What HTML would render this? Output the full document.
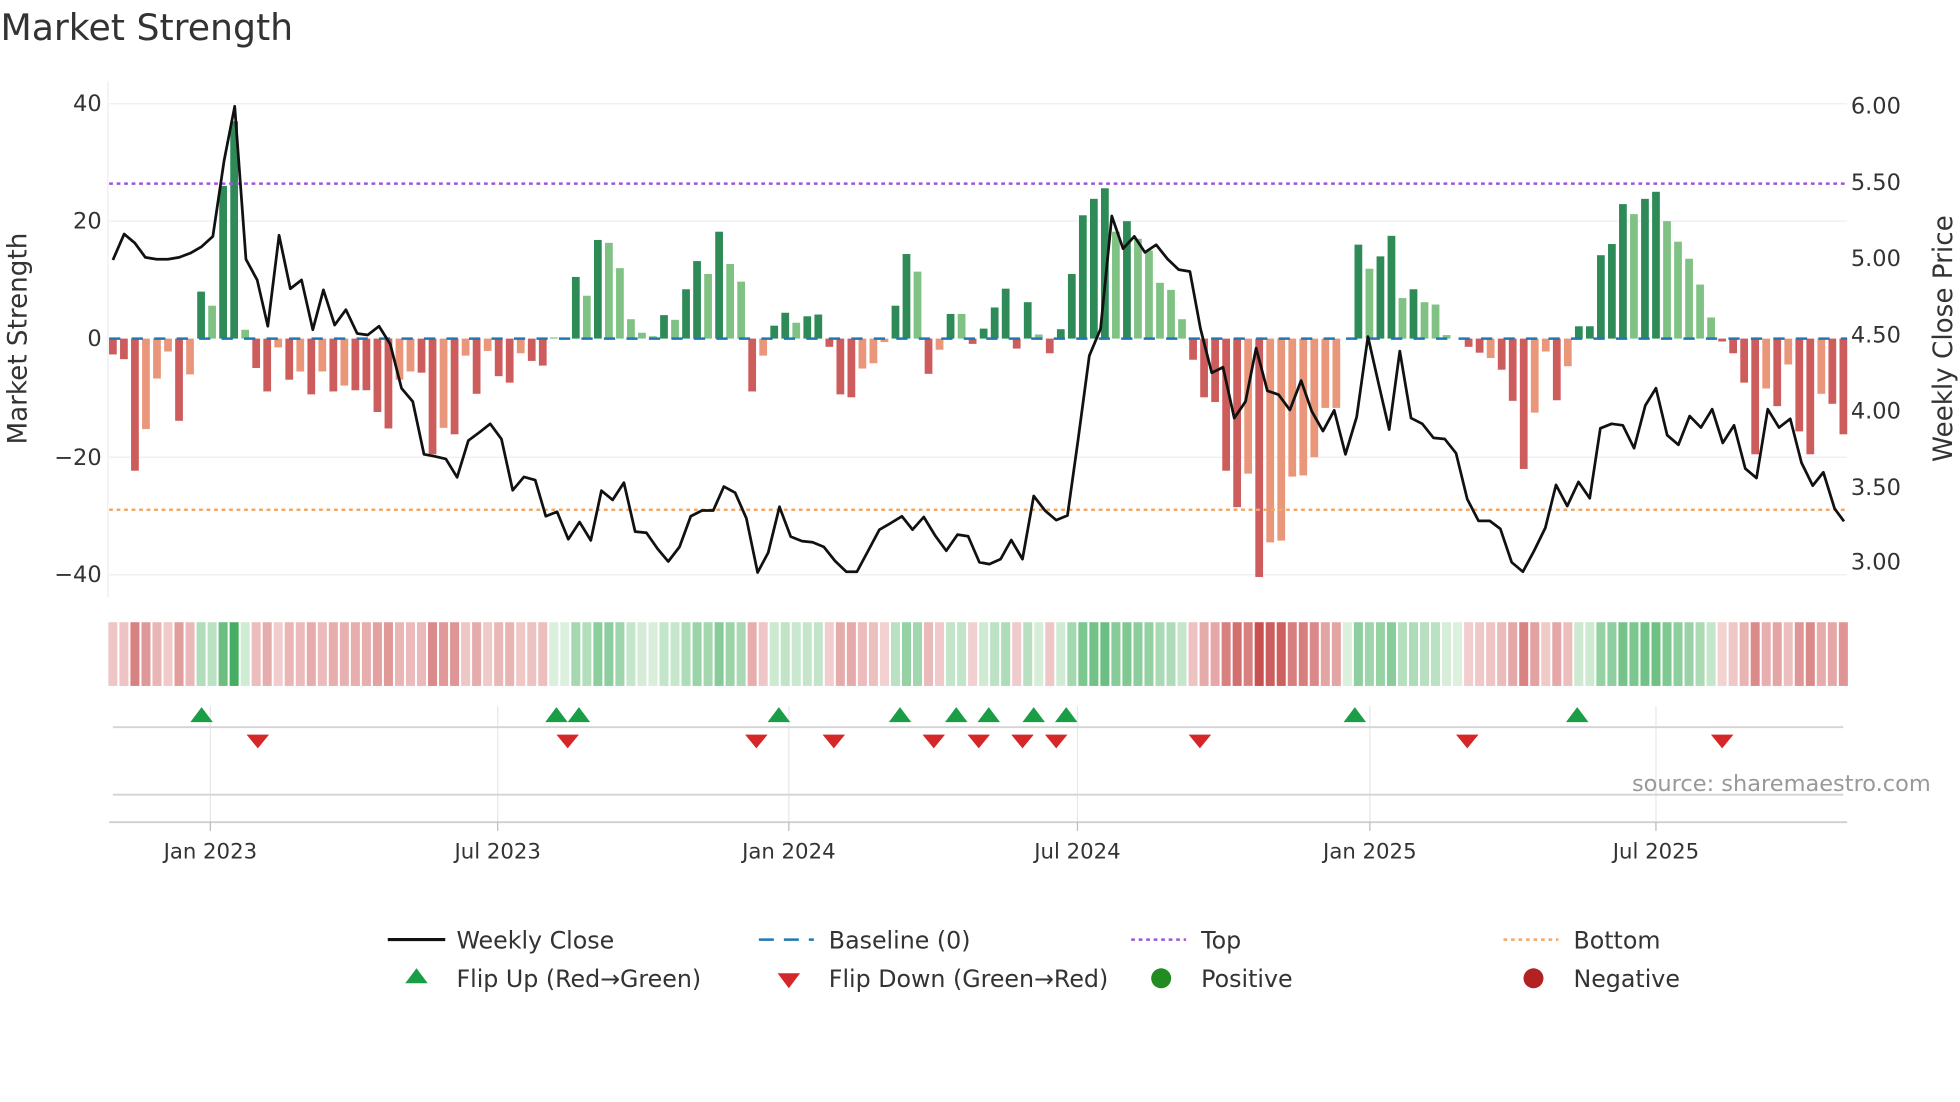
<!DOCTYPE html>
<html><head><meta charset="utf-8"><style>
html,body{margin:0;padding:0;background:#fff;width:1960px;height:1102px;overflow:hidden}
svg{display:block}
text{font-family:"DejaVu Sans","Liberation Sans",sans-serif;fill:#333}
</style></head><body>
<svg id="s" width="1960" height="1102" viewBox="0 0 1568 882" xmlns="http://www.w3.org/2000/svg">
<text x="0" y="32" font-size="29">Market Strength</text>
<g stroke="#eceef2" stroke-width="1">
<line x1="87" y1="83" x2="1478" y2="83"/><line x1="87" y1="177" x2="1478" y2="177"/>
<line x1="87" y1="366" x2="1478" y2="366"/><line x1="87" y1="460" x2="1478" y2="460"/>
<line x1="86" y1="65" x2="86" y2="478"/>
</g>
<g font-size="18" text-anchor="end">
<text x="81" y="89">40</text><text x="81" y="183">20</text><text x="81" y="277">0</text>
<text x="81" y="372">−20</text><text x="81" y="466">−40</text>
</g>
<g font-size="18">
<text x="1481" y="91">6.00</text><text x="1481" y="152">5.50</text><text x="1481" y="213">5.00</text>
<text x="1481" y="274">4.50</text><text x="1481" y="335">4.00</text><text x="1481" y="396">3.50</text>
<text x="1481" y="456">3.00</text>
</g>
<text transform="translate(21,271) rotate(-90)" font-size="21" text-anchor="middle">Market Strength</text>
<text transform="translate(1562,271) rotate(-90)" font-size="21" text-anchor="middle">Weekly Close Price</text>
<g id="bars"></g>
<line x1="87" y1="271" x2="1478" y2="271" stroke="#1f77b4" stroke-width="2" stroke-dasharray="9,9"/>
<line x1="87" y1="147" x2="1478" y2="147" stroke="#9b59d6" stroke-width="2" stroke-dasharray="3,3"/>
<line x1="87" y1="408" x2="1478" y2="408" stroke="#f0a868" stroke-width="2" stroke-dasharray="3,3"/>
<polyline id="pl" fill="none" stroke="#111" stroke-width="2.2" stroke-linejoin="round"/>
<g id="strip"></g>
<g stroke="#e6e8ec" stroke-width="1">
<line x1="168" y1="565" x2="168" y2="658"/><line x1="398" y1="565" x2="398" y2="658"/>
<line x1="631" y1="565" x2="631" y2="658"/><line x1="862" y1="565" x2="862" y2="658"/>
<line x1="1096" y1="565" x2="1096" y2="658"/><line x1="1325" y1="565" x2="1325" y2="658"/>
</g>
<line x1="90" y1="582" x2="1475" y2="582" stroke="#d4d4d4" stroke-width="1.5"/>
<line x1="90" y1="636" x2="1475" y2="636" stroke="#d4d4d4" stroke-width="1.5"/>
<line x1="87" y1="658" x2="1478" y2="658" stroke="#cfcfcf" stroke-width="1.5"/>
<g stroke="#bbb" stroke-width="1">
<line x1="168" y1="658" x2="168" y2="665"/><line x1="398" y1="658" x2="398" y2="665"/>
<line x1="631" y1="658" x2="631" y2="665"/><line x1="862" y1="658" x2="862" y2="665"/>
<line x1="1096" y1="658" x2="1096" y2="665"/><line x1="1325" y1="658" x2="1325" y2="665"/>
</g>
<g id="tri"></g>
<text x="1545" y="633" font-size="18" text-anchor="end" style="fill:#999">source: sharemaestro.com</text>
<g font-size="17" text-anchor="middle">
<text x="168" y="687">Jan 2023</text><text x="398" y="687">Jul 2023</text><text x="631" y="687">Jan 2024</text>
<text x="862" y="687">Jul 2024</text><text x="1096" y="687">Jan 2025</text><text x="1325" y="687">Jul 2025</text>
</g>
<g font-size="19">
<line x1="310" y1="752" x2="356" y2="752" stroke="#111" stroke-width="2.5"/>
<text x="365" y="759">Weekly Close</text>
<line x1="607" y1="752" x2="651" y2="752" stroke="#1f77b4" stroke-width="2" stroke-dasharray="12,8"/>
<text x="663" y="759">Baseline (0)</text>
<line x1="905" y1="752" x2="949" y2="752" stroke="#9b59d6" stroke-width="2" stroke-dasharray="3,3"/>
<text x="961" y="759">Top</text>
<line x1="1203" y1="752" x2="1247" y2="752" stroke="#f0a868" stroke-width="2" stroke-dasharray="3,3"/>
<text x="1259" y="759">Bottom</text>
<polygon points="333,775 324,787 342,787" fill="#1a9e45"/>
<text x="365" y="790">Flip Up (Red→Green)</text>
<polygon points="622,779 640,779 631,791" fill="#d62728"/>
<text x="663" y="790">Flip Down (Green→Red)</text>
<circle cx="929" cy="783" r="8" fill="#228b22"/>
<text x="961" y="790">Positive</text>
<circle cx="1227" cy="783" r="8" fill="#b22222"/>
<text x="1259" y="790">Negative</text>
</g>
</svg>
<script>
var NS="http://www.w3.org/2000/svg";
function el(t,a,p){var e=document.createElementNS(NS,t);for(var k in a)e.setAttribute(k,a[k]);p.appendChild(e);return e;}
var B=[[-2.7,'d'],[-3.5,'d'],[-22.5,'d'],[-15.4,'l'],[-6.8,'l'],[-2.2,'l'],[-14,'d'],[-6.1,'l'],[8,'d'],[5.6,'l'],[26,'d'],[37,'d'],[1.5,'l'],[-5,'d'],[-9,'d'],[-1.5,'l'],[-7,'d'],[-5.6,'l'],[-9.5,'d'],[-5.6,'l'],[-9,'d'],[-8,'l'],[-8.8,'d'],[-8.8,'d'],[-12.5,'d'],[-15.3,'d'],[-7,'l'],[-5.6,'l'],[-5.8,'d'],[-19.7,'d'],[-15.2,'l'],[-16.3,'d'],[-2.9,'l'],[-9.4,'d'],[-2.1,'l'],[-6.4,'d'],[-7.5,'d'],[-2.5,'l'],[-3.8,'d'],[-4.6,'d'],[0.2,'l'],[0,'l'],[10.5,'d'],[7.3,'l'],[16.8,'d'],[16.3,'l'],[12,'l'],[3.3,'l'],[1,'l'],[0.4,'l'],[4,'d'],[3.2,'l'],[8.4,'d'],[13.2,'d'],[11,'l'],[18.2,'d'],[12.7,'l'],[9.7,'l'],[-9,'d'],[-2.9,'l'],[2.2,'d'],[4.4,'d'],[2.7,'l'],[3.8,'d'],[4.1,'d'],[-1.4,'d'],[-9.5,'d'],[-10,'d'],[-5.1,'l'],[-4.2,'l'],[-0.6,'l'],[5.6,'d'],[14.4,'d'],[11.4,'l'],[-6,'d'],[-1.9,'l'],[4.2,'d'],[4.2,'l'],[-0.9,'d'],
[1.7,'d'],[5.3,'d'],[8.5,'d'],[-1.7,'d'],[6.2,'d'],[0.7,'l'],[-2.5,'d'],[1.6,'d'],[11,'d'],[21,'d'],[23.8,'d'],[25.6,'d'],[18.2,'l'],[20,'d'],[17,'l'],[15,'l'],[9.5,'l'],[8.3,'l'],[3.3,'l'],[-3.6,'d'],[-10,'d'],[-10.8,'d'],[-22.5,'d'],[-28.7,'d'],[-23,'l'],[-40.6,'d'],[-34.7,'l'],[-34.4,'l'],[-23.5,'l'],[-23.3,'l'],[-20.2,'l'],[-11.8,'l'],[-11.8,'l'],[0,'l'],[16,'d'],[11.9,'l'],[14,'d'],[17.5,'d'],[6.9,'l'],[8.4,'d'],[6.2,'l'],[5.8,'l'],[0.6,'l'],[0,'l'],[-1.4,'d'],[-2.4,'d'],[-3.3,'l'],[-5.3,'d'],[-10.6,'d'],[-22.2,'d'],[-12.6,'l'],[-2.2,'l'],[-10.5,'d'],[-4.7,'l'],[2.1,'d'],[2.1,'d'],[14.2,'d'],[16.1,'d'],[22.9,'d'],[21.2,'l'],[23.8,'d'],[25,'d'],[20,'l'],[16.5,'l'],[13.6,'l'],[9.2,'l'],[3.6,'l'],[-0.5,'d'],[-2.5,'d'],[-7.5,'d'],[-19.7,'d'],[-8.5,'l'],[-11.5,'d'],[-4.4,'l'],[-15.8,'d'],[-19.7,'d'],[-9.4,'l'],[-11.1,'d'],[-16.3,'d']];
var n=B.length, x0=90, step=(1475-90)/(n-1);
var g=document.getElementById('bars'), st=document.getElementById('strip');
function mix(a,b,t){return 'rgb('+a.map(function(v,i){return Math.round(v+(b[i]-v)*t)}).join(',')+')';}
for(var i=0;i<n;i++){
 var v=B[i][0],t=B[i][1],x=x0+i*step,col;
 if(v>=0)col=t=='d'?'#2e8b57':'#7fc283';else col=t=='d'?'#cd5c5c':'#e9967a';
 var y=271-v*4.7;
 if(Math.abs(v)>0.05) el('rect',{x:x-3.1,y:Math.min(y,271),width:6.2,height:Math.abs(v)*4.7,fill:col},g);
 var a=Math.min(1,Math.abs(v)/40), c;
 if(v>=0)c=mix([220,240,222],[60,170,90],Math.pow(a,0.8));else c=mix([244,214,214],[200,80,80],Math.pow(a,0.8));
 el('rect',{x:x-step/2+0.8,y:498,width:step-1.6,height:51,fill:c},st);
}
var P1=[[180,680],[198,612],[215,635],[232,673],[250,678],[268,678],[286,673],[304,662],[322,645],[340,618],[358,420],[375,278],[393,678],[411,732],[428,853],[446,615],[464,755],[482,732],[500,862],[517,758],[535,850],[553,810],[571,872],[588,876],[606,853],[624,900],[642,1015],[660,1050],[678,1188],[695,1193],[713,1200],[731,1248],[749,1152],[767,1130],[784,1108],[802,1148],[820,1282],[838,1247],[856,1255],[873,1350],[891,1338],[909,1410],[927,1365],[945,1413],[962,1283],[980,1307],[998,1262],[1016,1390],[1034,1393],[1052,1435],[1069,1468],[1087,1430],[1105,1350],[1123,1335],[1141,1335],[1158,1272],[1176,1288],[1194,1355],[1212,1497],[1229,1445],[1247,1325],[1265,1403],[1283,1415],[1300,1418],[1318,1430],[1336,1467],[1354,1495],[1371,1495],[1389,1440],[1407,1385],[1425,1368],[1443,1350],[1460,1385],[1478,1352],[1496,1400],[1514,1440],[1532,1398],[1549,1402],[1567,1470]];
var P2=[[15,1475],[33,1462],[50,1412],[68,1462],[86,1297],[104,1335],[122,1360],[140,1348],[157,1150],[175,930],[193,860],[211,565],[229,650],[247,618],[264,660],[282,640],[300,677],[318,705],[336,710],[353,860],[371,975],[389,960],[407,1093],[425,1050],[442,910],[460,1022],[478,1032],[496,1072],[514,995],[531,1075],[549,1127],[567,1073],[585,1188],[603,1090],[621,880],[639,1010],[655,1123],[672,918],[690,1093],[708,1108],[726,1145],[744,1148],[762,1185],[780,1305],[798,1362],[816,1362],[833,1383],[851,1470],[869,1495],[887,1440],[905,1380],[922,1268],[940,1323],[958,1260],[976,1303],[993,1120],[1011,1108],[1029,1112],[1047,1172],[1065,1060],[1082,1015],[1100,1138],[1118,1163],[1136,1088],[1154,1118],[1172,1070],[1189,1158],[1207,1112],[1225,1225],[1243,1250],[1261,1070],[1279,1118],[1297,1095],[1315,1210],[1333,1270],[1350,1235],[1368,1330],[1383,1363]];
var pts=[];
P1.forEach(function(p){pts.push((p[0]*0.5).toFixed(1)+','+(p[1]*0.3061).toFixed(1));});
P2.forEach(function(p){pts.push((784+p[0]*0.5).toFixed(1)+','+(p[1]*0.3061).toFixed(1));});
document.getElementById('pl').setAttribute('points',pts.join(' '));
var tr=document.getElementById('tri');
[161,445,463,623,720,765,791,827,853,1084,1262].forEach(function(x){el('polygon',{points:x+',566 '+(x-9)+',578 '+(x+9)+',578',fill:'#1a9e45'},tr);});
[206,454,605,667,747,783,818,845,960,1174,1378].forEach(function(x){el('polygon',{points:(x-9)+',588 '+(x+9)+',588 '+x+',599',fill:'#d62728'},tr);});
</script>
</body></html>
